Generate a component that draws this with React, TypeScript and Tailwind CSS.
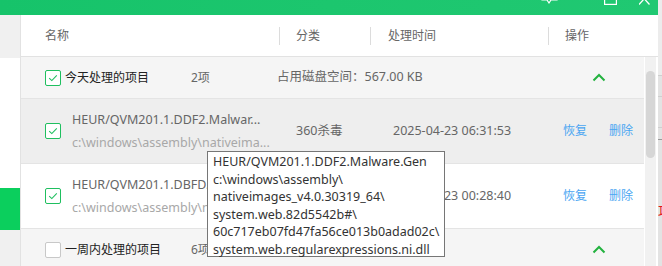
import React from "react";

const FONT = { fontFamily: '"Noto Sans", "Noto Sans CJK SC", sans-serif' };

function Check({ on }: { on: boolean }) {
  return (
    <div
      className={`w-[16px] h-[16px] shrink-0 rounded-[2px] border flex items-center justify-center bg-white ${
        on ? "border-[#1fbf5f]" : "border-[#c8c8c8]"
      }`}
    >
      {on && (
        <svg width="10" height="8" viewBox="0 0 10 8">
          <path d="M1.2 4.2 L3.8 6.6 L8.8 1.4" fill="none" stroke="#1fbf5f" strokeWidth="1.1" />
        </svg>
      )}
    </div>
  );
}

function Chevron() {
  return (
    <svg width="14" height="9" viewBox="0 0 14 9">
      <path d="M1.5 7.5 L7 2 L12.5 7.5" fill="none" stroke="#23b23f" strokeWidth="2" />
    </svg>
  );
}

function GroupRow({ on, label, count, extra }: { on: boolean; label: string; count: string; extra?: string }) {
  return (
    <div className="h-[42px] shrink-0 flex items-center bg-[#f5f5f5] border-b border-[#e4e4e4] text-[12px]">
      <div className="w-[256px] pl-[24px] flex items-center">
        <Check on={on} />
        <span className="ml-[4px] text-[#222]">{label}</span>
        <span className="ml-auto w-[86px] text-[#666]">{count}</span>
      </div>
      <div className="w-[315px] text-[#666] text-[12.5px]">{extra}</div>
      <div className="w-[14px] flex justify-center">
        <Chevron />
      </div>
    </div>
  );
}

function ItemRow({ hover, title, path, cat, time }: { hover: boolean; title: string; path: string; cat: string; time: string }) {
  return (
    <div
      className={`h-[65px] shrink-0 flex items-center border-b border-[#e4e4e4] text-[12.5px] ${
        hover ? "bg-[#eeeeee]" : "bg-white"
      }`}
    >
      <div className="w-[258px] pl-[24px] flex items-center">
        <Check on />
        <div className="ml-[11px] flex flex-col gap-[5px] leading-[18px]">
          <span className="text-[#666]">{title}</span>
          <span className="text-[#a8a8a8]">{path}</span>
        </div>
      </div>
      <div className="w-[97px] pl-[17px] text-[#666]">{cat}</div>
      <div className="w-[187px] pl-[17px] text-[#666]">{time}</div>
      <div className="flex gap-[22px] text-[12px] text-[#4ba6f2]">
        <span>恢复</span>
        <span>删除</span>
      </div>
    </div>
  );
}

export default function App() {
  return (
    <div className="w-[662px] h-[266px] overflow-hidden flex bg-white relative" style={FONT}>
      <div className="w-[658px] h-full flex flex-col">
        {/* title bar */}
        <div className="h-[15px] shrink-0 bg-gradient-to-r from-[#16c36a] via-[#1cc66e] to-[#20c872] relative overflow-hidden">
          <div className="absolute right-[8px] top-[-12px] flex items-end gap-[46px]">
            <svg width="17" height="17" viewBox="0 0 17 17">
              <path d="M1 1 H16 V12 H10 L8 15 L6 12 H1 Z" fill="none" stroke="#fff" strokeWidth="1.2" />
            </svg>
            <div className="flex items-end gap-[22px]">
              <svg width="13" height="16" viewBox="0 0 13 16">
                <rect x="0.6" y="0.6" width="11.8" height="14.8" fill="none" stroke="#fff" strokeWidth="1.2" />
              </svg>
              <svg width="11" height="16" viewBox="0 0 11 16">
                <path d="M0 4 L10.5 15.5 M10.5 4 L0 15.5" stroke="#fff" strokeWidth="1.3" />
              </svg>
            </div>
          </div>
        </div>

        <div className="flex-1 flex min-h-0">
          {/* sidebar */}
          <div className="w-[21px] shrink-0 flex flex-col border-r border-[#e2e2e2]">
            <div className="h-[43px] bg-[#f0f0f0]" />
            <div className="h-[130px] bg-white" />
            <div className="h-[42px] bg-[#0bcf5d]" />
            <div className="flex-1 bg-[#f0f0f0]" />
          </div>

          {/* main */}
          <div className="flex-1 flex flex-col min-w-0">
            <div className="h-[42px] shrink-0 flex items-center border-b border-[#e2e2e2] text-[12px] text-[#666]">
              <div className="w-[258px] pl-[24px]">名称</div>
              <div className="w-px h-[18px] bg-[#dcdcdc]" />
              <div className="w-[90px] pl-[16px]">分类</div>
              <div className="w-px h-[18px] bg-[#dcdcdc]" />
              <div className="w-[177px] pl-[17px]">处理时间</div>
              <div className="w-px h-[18px] bg-[#dcdcdc]" />
              <div className="pl-[16px]">操作</div>
            </div>

            <div className="flex-1 flex min-h-0">
              <div className="w-[623px] flex flex-col">
                <GroupRow on label="今天处理的项目" count="2项" extra="占用磁盘空间：567.00 KB" />
                <ItemRow
                  hover
                  title="HEUR/QVM201.1.DDF2.Malwar..."
                  path="c:\windows\assembly\nativeima..."
                  cat="360杀毒"
                  time="2025-04-23 06:31:53"
                />
                <ItemRow
                  hover={false}
                  title="HEUR/QVM201.1.DBFD..."
                  path="c:\windows\assembly\n..."
                  cat=""
                  time="2025-04-23 00:28:40"
                />
                <GroupRow on={false} label="一周内处理的项目" count="6项" />
              </div>
              <div className="w-[14px] pl-[1px] pr-[2px]">
                <div className="h-full bg-[#f1f1f1] px-[1px] pt-[14px]">
                  <div className="h-[87px] rounded-[5px] bg-[#d6d6d6]" />
                </div>
              </div>
            </div>
          </div>
        </div>
      </div>

      {/* window behind */}
      <div className="w-[4px] h-full bg-[#e3e3e3] flex flex-col overflow-hidden">
        <div className="h-[76px] bg-[#ececec] border-b border-[#cfcfcf]" />
        <div className="h-[21px] border-b border-[#cfcfcf]" />
        <div className="h-[31px] border-b border-[#cfcfcf]" />
        <div className="h-[12px] border-b border-[#9a9a9a]" />
        <div className="h-[64px]" />
        <div className="text-[14px] leading-[16px] text-[#e8141c] whitespace-nowrap">项</div>
      </div>

      {/* tooltip */}
      <div className="absolute left-[207px] top-[151px] w-[238px] h-[106px] bg-white border border-[#767676] px-[5px] pt-[1px] text-[12.5px] leading-[17.6px] text-[#333] whitespace-nowrap">
        <div>HEUR/QVM201.1.DDF2.Malware.Gen</div>
        <div>c:\windows\assembly\</div>
        <div>nativeimages_v4.0.30319_64\</div>
        <div>system.web.82d5542b#\</div>
        <div>60c717eb07fd47fa56ce013b0adad02c\</div>
        <div>system.web.regularexpressions.ni.dll</div>
      </div>
    </div>
  );
}
